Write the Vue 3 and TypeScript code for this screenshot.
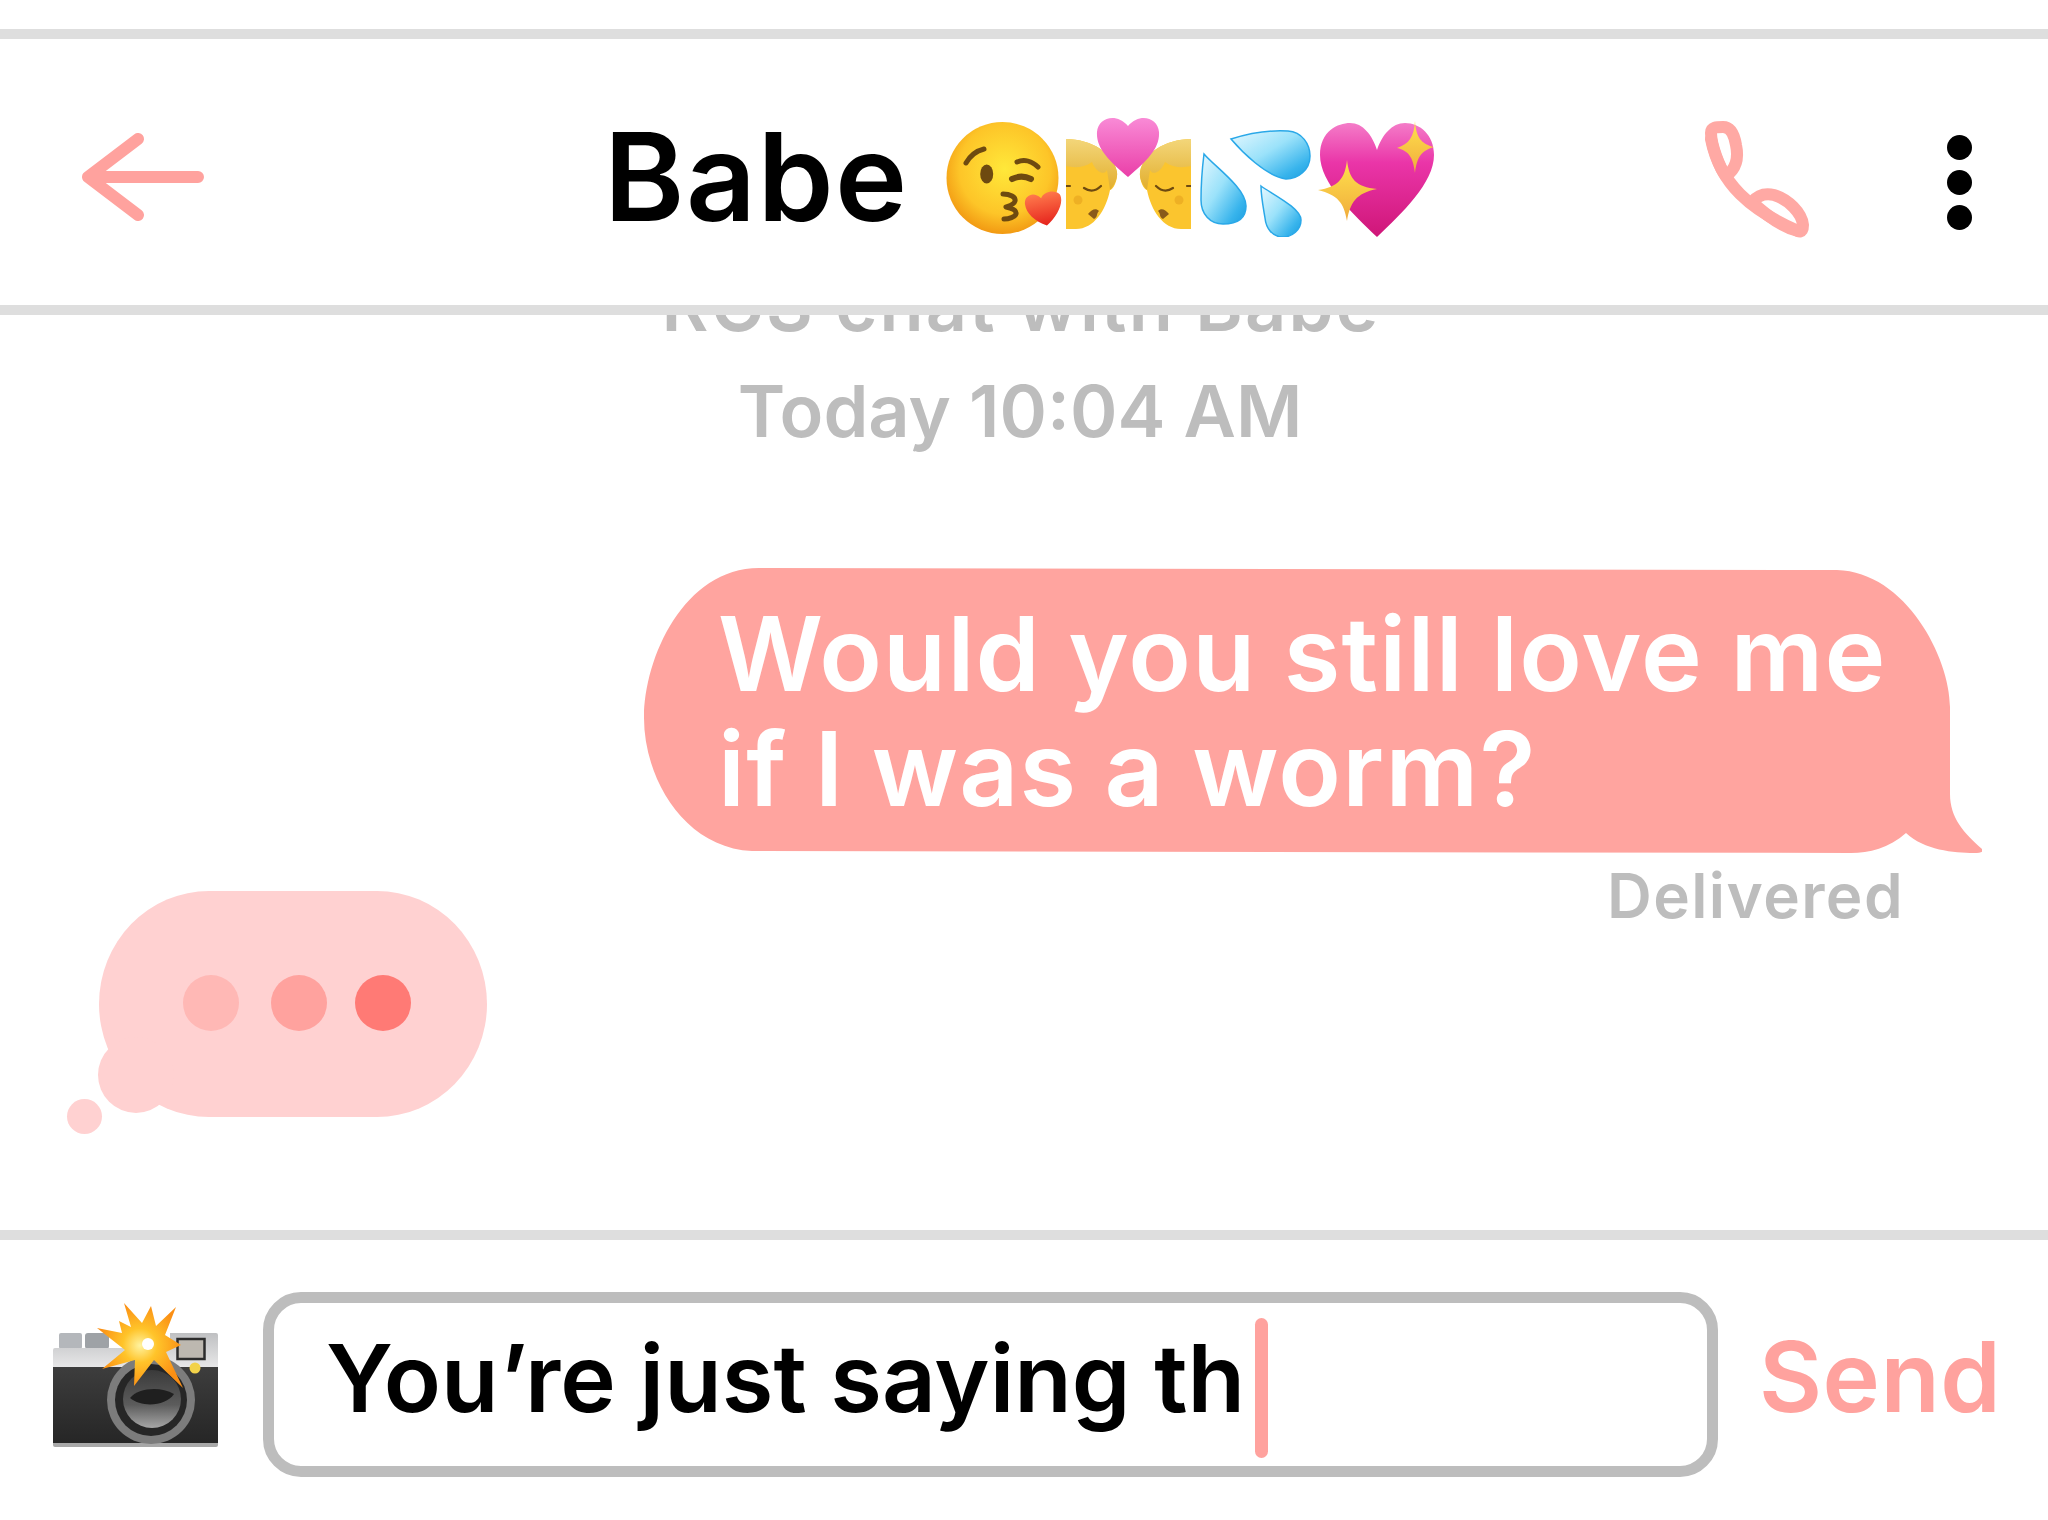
<template>
  <div class="screen">
    <header class="topbar">
      <svg class="back" width="122" height="88" viewBox="0 0 122 88">
        <path d="M56 6 L6 44 M6 44 L56 82 M6 44 H116" fill="none" stroke="#ffa29e" stroke-width="12" stroke-linecap="round" stroke-linejoin="round" />
      </svg>
      <div class="title">
        <span class="name">Babe</span>
        <!-- blowing kiss -->
        <svg class="emoji kiss-face" width="118" height="112" viewBox="0 0 118 112">
          <defs>
            <radialGradient id="faceFill" cx="52%" cy="42%" r="58%">
              <stop offset="0" stop-color="#ffe83a" />
              <stop offset="0.7" stop-color="#fdc528" />
              <stop offset="1" stop-color="#f29a13" />
            </radialGradient>
            <linearGradient id="redHeart" x1="0" y1="0" x2="0" y2="1">
              <stop offset="0" stop-color="#ff7a4c" />
              <stop offset="1" stop-color="#e5221c" />
            </linearGradient>
          </defs>
          <circle cx="56.5" cy="56" r="56" fill="url(#faceFill)" />
          <ellipse cx="40.7" cy="52" rx="6.5" ry="9.5" fill="#6e4a10" />
          <g fill="none" stroke="#6e4a10" stroke-width="5" stroke-linecap="round" stroke-linejoin="round">
            <path d="M20 41 C24 34 30 29 38 27" />
            <path d="M71 40 C78 37 86 39 92 45" />
            <path d="M66 57 C72 54 79 54 85 57" stroke-width="6" />
            <path d="M57 72 C64 72 70 75 69 79 C68 83 62 84 60 85 C65 86 71 88 70 92 C69 95 63 97 58 97" />
          </g>
          <path d="M97 104 C86 97 79 88 80 78 C81 70 91 67 97 76 C101 70 112 70 116 76 C119 85 109 97 97 104Z" transform="rotate(-12 97 85)" fill="url(#redHeart)" />
        </svg>
        <!-- kiss -->
        <svg class="emoji kiss" width="125" height="115" viewBox="0 0 125 115">
          <defs>
            <linearGradient id="pinkHeart" x1="0" y1="0" x2="0" y2="1">
              <stop offset="0" stop-color="#f98ad6" />
              <stop offset="1" stop-color="#ea3fa8" />
            </linearGradient>
            <linearGradient id="hair" x1="0" y1="0" x2="0" y2="1">
              <stop offset="0" stop-color="#f3d67a" />
              <stop offset="1" stop-color="#e2ae2d" />
            </linearGradient>
            <g id="person">
              <path d="M0 25 C26 25 48 40 51 58 C52 66 47 76 44 76 C40 96 28 115 10 115 L0 115Z" fill="#fbc52e" />
              <path d="M0 25 C26 25 48 40 51 58 C52 64 48 72 44 76 L41 56 C38 62 30 58 26 48 C18 54 8 54 0 52Z" fill="url(#hair)" />
              <path d="M0 72 H4 M18 74 C24 78 30 77 35 72" fill="none" stroke="#6e4a10" stroke-width="2.2" stroke-linecap="round" />
              <path d="M22 100 C26 95 30 94 33 97 C30 100 32 103 28 105Z" fill="#8a5a1a" />
              <circle cx="12" cy="86" r="4.5" fill="#eeb024" />
            </g>
          </defs>
          <use href="#person" />
          <use href="#person" transform="translate(125 0) scale(-1 1)" />
          <path d="M62 63 C42 46 30 34 31 18 C32 4 50 -2 62 12 C74 -2 92 4 93 18 C94 34 82 46 62 63Z" fill="url(#pinkHeart)" />
        </svg>
        <!-- sweat drops -->
        <svg class="emoji drops" width="111" height="107" viewBox="0 0 111 107">
          <defs>
            <linearGradient id="drop" x1="0" y1="0" x2="1" y2="1">
              <stop offset="0" stop-color="#e6f8ff" />
              <stop offset="0.45" stop-color="#9be2fa" />
              <stop offset="0.8" stop-color="#38b4ec" />
              <stop offset="1" stop-color="#1a9ddf" />
            </linearGradient>
          </defs>
          <g fill="url(#drop)" stroke="#2aa8e8" stroke-width="1.5">
            <path d="M4 24 C14 36 46 58 46 76 C46 90 35 94 23 94 C10 94 1 84 1 70 C1 56 2 40 4 24Z" />
            <path d="M31 9 C50 3 72 0 88 1 C102 2 110 14 110 26 C110 40 98 49 86 49 C66 46 42 22 31 9Z" />
            <path d="M61 56 C72 64 101 78 101 90 C101 100 92 107 83 107 C72 107 66 98 65 88 C63 76 61 66 61 56Z" />
          </g>
        </svg>
        <!-- sparkling heart -->
        <svg class="emoji sparkle-heart" width="118" height="116" viewBox="0 0 118 116">
          <defs>
            <linearGradient id="magenta" x1="0" y1="0" x2="0" y2="1">
              <stop offset="0" stop-color="#f47cc8" />
              <stop offset="0.35" stop-color="#ea35a8" />
              <stop offset="1" stop-color="#cf1678" />
            </linearGradient>
            <linearGradient id="gold" x1="0" y1="0" x2="0" y2="1">
              <stop offset="0" stop-color="#ffe24d" />
              <stop offset="1" stop-color="#f0ab3c" />
            </linearGradient>
          </defs>
          <path d="M59 116 C34 92 2 62 2 34 C2 10 20 2 32 2 C45 2 54 14 59 29 C64 14 74 2 87 2 C102 2 116 14 116 34 C116 62 84 92 59 116Z" fill="url(#magenta)" />
          <path d="M29 39 C31 58 38 66 59 68 C38 72 32 82 29 100 C26 82 20 74 0 69 C20 66 27 58 29 39Z" fill="url(#gold)" />
          <path d="M97 0 C98 16 103 23 116 26 C103 30 99 36 97 52 C95 36 91 30 79 27 C91 23 96 16 97 0Z" fill="url(#gold)" />
        </svg>
      </div>
      <svg class="phone" width="140" height="140" viewBox="0 0 140 140">
        <g fill="none" stroke="#ffa9a4" stroke-width="12" stroke-linecap="round" stroke-linejoin="round">
          <path d="M36 67 C30 60 21 36 21 24 C21 18 27 18 33 18 C40 18 44 24 46 36 C49 50 46 60 36 67Z" />
          <path d="M62 93 C68 86 76 84 84 86 C98 90 112 104 113 116 C113 120 112 124 108 122 C92 118 76 106 62 93Z" />
          <path d="M21 30 C25 50 35 70 50 85 C65 100 85 112 108 122" />
        </g>
      </svg>
      <div class="more">
        <span></span>
        <span></span>
        <span></span>
      </div>
    </header>

    <main class="thread">
      <p class="meta meta-rcs">RCS chat with Babe</p>
      <p class="meta">Today 10:04 AM</p>

      <div class="bubble">
        <svg class="bubble-bg" width="1338" height="285" viewBox="0 0 1338 285">
          <path d="M115 0 L1193 2 C1262 4 1306 90 1306 139 L1306 226 C1306 250 1320 265 1338 281 Q1341 285 1330 285 C1310 285 1280 282 1262 265 C1245 280 1225 285 1207 285 L108 283 C40 280 0 210 0 150 C0 90 40 0 115 0Z" fill="#ffa49f" />
        </svg>
        <p class="bubble-text">Would you still love me<br />if I was a worm?</p>
      </div>
      <p class="delivered">Delivered</p>

      <div class="typing">
        <span class="dot dot-1"></span>
        <span class="dot dot-2"></span>
        <span class="dot dot-3"></span>
        <span class="puff puff-big"></span>
        <span class="puff puff-small"></span>
      </div>
    </main>

    <footer class="composer">
      <!-- camera with flash -->
      <svg class="camera" width="166" height="150" viewBox="53 1300 166 150">
        <defs>
          <linearGradient id="silver" x1="0" y1="0" x2="0" y2="1">
            <stop offset="0" stop-color="#bfc0c2" />
            <stop offset="1" stop-color="#e8e8e9" />
          </linearGradient>
          <linearGradient id="leather" x1="0" y1="0" x2="0" y2="1">
            <stop offset="0" stop-color="#3d3d3d" />
            <stop offset="1" stop-color="#262626" />
          </linearGradient>
          <linearGradient id="glass" x1="0" y1="0" x2="0" y2="1">
            <stop offset="0" stop-color="#3a3a3a" />
            <stop offset="0.6" stop-color="#5c5c5c" />
            <stop offset="1" stop-color="#a6a6a6" />
          </linearGradient>
          <radialGradient id="burst" cx="50%" cy="50%" r="50%">
            <stop offset="0" stop-color="#fff3a0" />
            <stop offset="0.4" stop-color="#ffc42a" />
            <stop offset="1" stop-color="#fb8f14" />
          </radialGradient>
        </defs>
        <rect x="59" y="1333" width="23" height="16" rx="2" fill="#b4b7bb" />
        <rect x="85" y="1333" width="24" height="16" rx="3" fill="#9ea2a6" />
        <path d="M53 1350 Q53 1348 55 1348 H170 V1333 H216 Q218 1333 218 1335 V1368 H53Z" fill="url(#silver)" />
        <rect x="53" y="1367" width="165" height="76" fill="url(#leather)" />
        <path d="M53 1443 H218 V1445 Q218 1447 216 1447 H55 Q53 1447 53 1445Z" fill="#a8a8a8" />
        <rect x="177.5" y="1339" width="27" height="20" fill="#bdb8b0" stroke="#2c2c2c" stroke-width="2.5" />
        <circle cx="195" cy="1368" r="5.5" fill="#f2d24a" />
        <circle cx="151" cy="1400" r="44" fill="#7c7c7c" />
        <circle cx="151" cy="1400" r="36" fill="#262626" />
        <circle cx="152" cy="1399" r="29" fill="url(#glass)" />
        <path d="M130 1398 C138 1388 160 1386 174 1394 C166 1406 142 1408 130 1398Z" fill="#1f1f1f" />
        <path d="M124 1303 L142 1323 L151 1306 L156 1326 L176 1307 L165 1335 L181 1345 L166 1352 L183 1388 L154 1360 L134 1386 L135 1360 L102 1369 L125 1350 L97 1328 L122 1333 L119 1321 L131 1327Z" fill="url(#burst)" />
        <circle cx="148" cy="1344" r="6" fill="#ffffff" />
      </svg>
      <div class="field">
        <span class="field-text">You’re just saying th</span>
        <span class="caret"></span>
      </div>
      <span class="send">Send</span>
    </footer>
  </div>
</template>

<script setup lang="ts">
</script>

<style>
body {
  background: #fff;
}
</style>

<style scoped>
.screen {
  width: 2048px;
  height: 1520px;
  display: flex;
  flex-direction: column;
  background: #fff;
  overflow: hidden;
  font-family: Inter, "Liberation Sans", sans-serif;
}

.topbar {
  flex: 0 0 286px;
  box-sizing: border-box;
  margin-top: 29px;
  padding: 10px 0 0 82px;
  border-top: 10px solid #dedede;
  border-bottom: 10px solid #dedede;
  display: flex;
  align-items: center;
}

.title {
  display: flex;
  align-items: center;
  margin-left: 400px;
}

.name {
  font-size: 122px;
  font-weight: 600;
  letter-spacing: 1.5px;
  line-height: 1;
  color: #000;
  margin-right: 37px;
}

.emoji {
  flex: none;
}

.kiss-face {
  margin-top: 2px;
}

.kiss {
  margin-left: 2px;
  margin-top: -12px;
}

.drops {
  margin-left: 9px;
  margin-top: 13px;
}

.sparkle-heart {
  margin-left: 7px;
  margin-top: 4px;
}

.phone {
  flex: none;
  margin-left: 254px;
  margin-top: 4px;
}

.more {
  display: flex;
  flex-direction: column;
  gap: 10px;
  margin-left: 117px;
  margin-top: 10px;
}

.more span {
  display: block;
  width: 25px;
  height: 25px;
  border-radius: 50%;
  background: #000;
}

.thread {
  flex: 1;
  min-height: 0;
  overflow: hidden;
  display: flex;
  flex-direction: column;
  justify-content: flex-end;
  padding-bottom: 113px;
}

.meta {
  flex: none;
  margin: 0;
  padding-right: 8px;
  text-align: center;
  font-size: 72px;
  line-height: 106px;
  font-weight: 600;
  color: #bdbdbd;
}

.meta-rcs {
  letter-spacing: 2.2px;
  padding-right: 6px;
}

.bubble {
  flex: none;
  position: relative;
  align-self: flex-end;
  width: 1338px;
  height: 285px;
  margin-top: 104px;
  margin-right: 66px;
}

.bubble-bg {
  position: absolute;
  inset: 0;
}

.bubble-text {
  position: relative;
  margin: 0;
  padding: 28px 0 0 74px;
  font-size: 103px;
  letter-spacing: 1.25px;
  line-height: 115px;
  font-weight: 600;
  color: #fff;
}

.delivered {
  flex: none;
  align-self: flex-end;
  margin: 8px 144px 0 0;
  font-size: 62px;
  letter-spacing: 1.4px;
  line-height: 70px;
  font-weight: 600;
  color: #bdbdbd;
}

.typing {
  flex: none;
  position: relative;
  align-self: flex-start;
  display: flex;
  align-items: center;
  box-sizing: border-box;
  width: 388px;
  height: 226px;
  margin-top: -40px;
  margin-left: 99px;
  padding-left: 84px;
  padding-bottom: 2px;
  background: #ffd1d1;
  border-radius: 110px / 113px;
}

.dot {
  display: block;
  width: 56px;
  height: 56px;
  border-radius: 50%;
}

.dot-1 {
  background: #ffb8b5;
}

.dot-2 {
  background: #ffa29e;
  margin: 0 28px 0 32px;
}

.dot-3 {
  background: #ff7a75;
}

.puff {
  position: absolute;
  border-radius: 50%;
  background: #ffd1d1;
}

.puff-big {
  left: -1px;
  top: 146px;
  width: 76px;
  height: 76px;
}

.puff-small {
  left: -32px;
  top: 208px;
  width: 35px;
  height: 35px;
}

.composer {
  flex: 0 0 290px;
  box-sizing: border-box;
  padding: 9px 0 0 53px;
  border-top: 10px solid #dedede;
  display: flex;
  align-items: center;
}

.camera {
  flex: none;
  margin-right: 44px;
  margin-bottom: 20px;
}

.field {
  flex: none;
  box-sizing: border-box;
  width: 1455px;
  height: 185px;
  padding-left: 52px;
  display: flex;
  align-items: center;
  border: 11px solid #bdbdbd;
  border-radius: 38px;
}

.field-text {
  margin-bottom: 14px;
  font-size: 94px;
  font-weight: 600;
  color: #000;
  white-space: nowrap;
}

.caret {
  display: block;
  width: 13px;
  height: 140px;
  margin-top: 6px;
  margin-left: 10px;
  border-radius: 7px;
  background: #ffa29e;
}

.send {
  margin-left: 41px;
  margin-bottom: 16px;
  font-size: 97px;
  font-weight: 600;
  letter-spacing: 0.5px;
  color: #ffa29e;
}
</style>
